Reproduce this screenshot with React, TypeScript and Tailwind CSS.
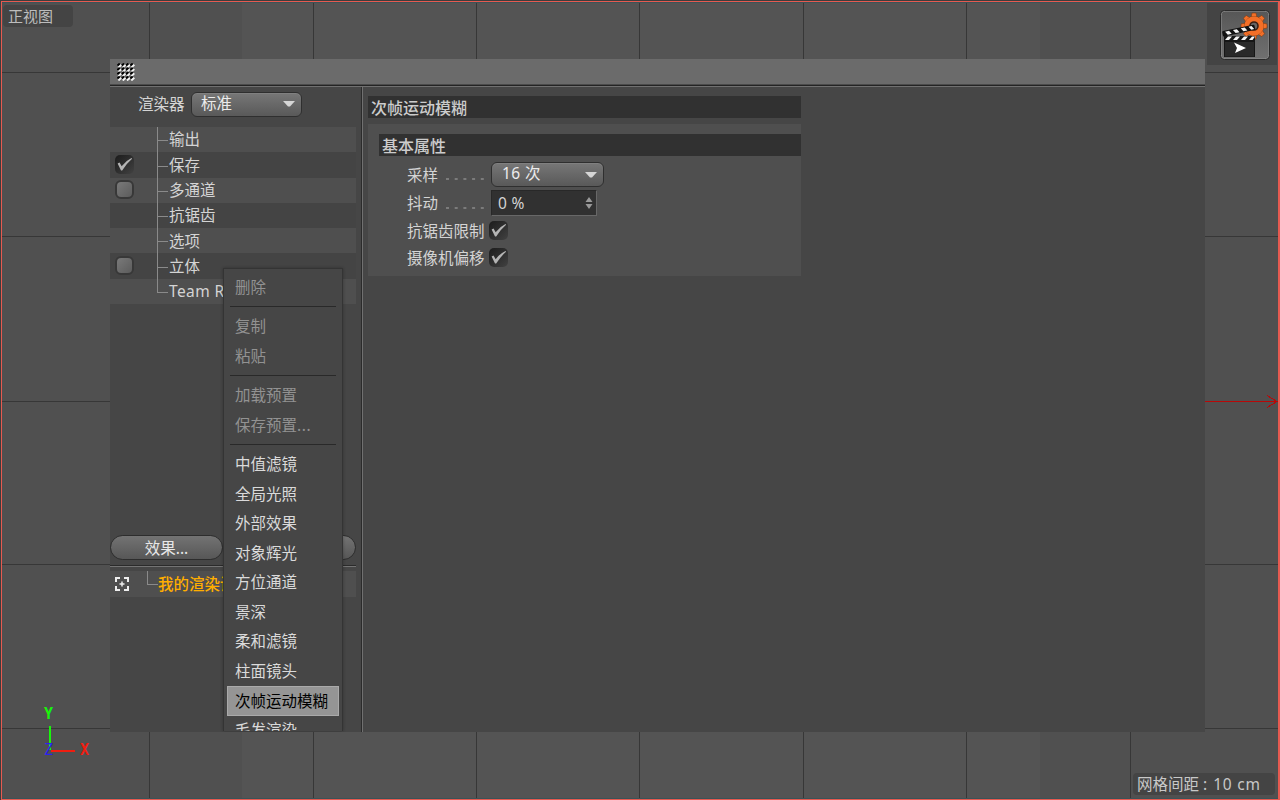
import type { ReactNode } from "react";

// Background grid line positions
const columns = [149, 313, 476, 639, 803, 966, 1130];
const rows = [72, 236, 401, 564, 728];

const settings: { label: string; box?: "on" | "off" }[] = [
	{ label: "输出" },
	{ label: "保存", box: "on" },
	{ label: "多通道", box: "off" },
	{ label: "抗锯齿" },
	{ label: "选项" },
	{ label: "立体", box: "off" },
	{ label: "Team Render" },
];

const effects = [
	"中值滤镜",
	"全局光照",
	"外部效果",
	"对象辉光",
	"方位通道",
	"景深",
	"柔和滤镜",
	"柱面镜头",
	"次帧运动模糊",
	"毛发渲染",
];

function Checkbox({ on }: { on: boolean }) {
	if (!on) {
		return (
			<span className="block size-[19px] rounded-[6px] border-2 border-[#383838] bg-linear-to-br from-[#7a7a7a] to-[#5c5c5c]" />
		);
	}
	return (
		<span className="block size-[19px] rounded-[5px] bg-linear-to-br from-[#1c1c1c] to-[#424242]">
			<svg viewBox="0 0 18 18" className="size-full">
				<path d="M2.5 8 4.3 7 6.3 10.6 Q10 5.5 15.6 2.8 L16.2 3.6 Q11 8 6.8 14.8 L5.7 14.8Z" fill="#b4b4b4" />
			</svg>
		</span>
	);
}

function Select({ value, className }: { value: string; className: string }) {
	return (
		<div
			className={`flex h-[25px] items-center justify-between rounded-[6px] border border-[#2f2f2f] bg-linear-to-b from-[#777777] to-[#595959] pl-[9px] pr-[6px] text-[#ececec] shadow-[inset_0_1px_0_#808080] ${className}`}
		>
			<span className="-mt-px">{value}</span>
			<svg viewBox="0 0 12 6" className="h-[6px] w-3">
				<path d="M0 0H12L7 5.5H5Z" fill="#d6d6d6" />
			</svg>
		</div>
	);
}

function MenuItem({ children, disabled }: { children: ReactNode; disabled?: boolean }) {
	return (
		<div className={`flex h-[29.6px] items-center px-2 pt-px ${disabled ? "text-[#929292]" : "text-[#dadada]"}`}>
			{children}
		</div>
	);
}

function Separator() {
	return <div className="mx-[3px] my-[4px] h-[1.8px] border-t border-[#292929]" />;
}

// Popup listing the effects, cut off by the lower edge of the window
function ContextMenu() {
	return (
		<div className="absolute left-[113px] top-[209px] h-[463px] w-[120px] overflow-hidden border border-b-0 border-[#343434] bg-[#464646] px-[3px] pt-[3px] shadow-[0_0_3px_rgba(0,0,0,0.3)]">
			<MenuItem disabled>删除</MenuItem>
			<Separator />
			<MenuItem disabled>复制</MenuItem>
			<MenuItem disabled>粘贴</MenuItem>
			<Separator />
			<MenuItem disabled>加载预置</MenuItem>
			<MenuItem disabled>
				保存预置<span className="tracking-[0.6px]">...</span>
			</MenuItem>
			<Separator />
			{effects.map((name) =>
				name === "次帧运动模糊" ? (
					<div key={name} className="flex h-[29.6px] items-center border border-[#aaaaaa] bg-[#959595] px-[7px] pt-px text-black">
						{name}
					</div>
				) : (
					<MenuItem key={name}>{name}</MenuItem>
				),
			)}
		</div>
	);
}

function SettingsTree() {
	return (
		<div className="mt-[10px] w-[246px]">
			{settings.map((item, i) => (
				<div key={item.label} className={`flex h-[25.3px] items-center ${i % 2 === 0 ? "bg-[#4f4f4f]" : "bg-[#444444]"}`}>
					<div className="-mt-px w-[46px] pl-[5px]">{item.box && <Checkbox on={item.box === "on"} />}</div>
					<div className="h-full w-[12px]">
						<div className={`w-[1.5px] bg-[#8a8a8a] ml-[0.5px] ${i === 6 ? "h-[13px]" : "h-full"}`} />
						<div className={`ml-px h-px bg-[#8a8a8a] ${i === 6 ? "" : "-mt-[12px]"}`} />
					</div>
					<span className={`whitespace-nowrap pl-[1px] pt-px ${i === 6 ? "tracking-[0.4px]" : ""}`}>{item.label}</span>
				</div>
			))}
		</div>
	);
}

function LeftPane() {
	return (
		<div className="flex w-[252px] shrink-0 flex-col border-r border-[#2b2b2b]">
			<div className="mt-[4px] flex h-[26px] items-center pl-7">
				<span className="w-[53px] pt-[2px]">渲染器</span>
				<Select value="标准" className="w-[111px]" />
			</div>
			<SettingsTree />
			<div className="mt-[231px] flex gap-[9px]">
				<div className="flex h-[25px] w-[113px] items-center justify-center rounded-full border border-[#2d2d2d] bg-linear-to-b from-[#737373] to-[#575757] text-[#e8e8e8]">
					<span className="pt-[2px]">效果...</span>
				</div>
				<div className="h-[25px] w-[124px] rounded-full border border-[#2d2d2d] bg-linear-to-b from-[#737373] to-[#575757]" />
			</div>
			<div className="mt-[5px] h-px w-[246px] bg-[#2b2b2b]" />
			<div className="h-px w-[246px] bg-[#747474]" />
			<div className="mt-[4px] flex h-[26px] w-[246px] items-center bg-[#4f4f4f]">
				<svg viewBox="0 0 14 14" className="ml-[5px] size-[14px]" fill="none" stroke="#eeeeee" strokeWidth="2">
					<path d="M1 5V1H5M9 1H13V5M13 9V13H9M5 13H1V9" />
					<path d="M7 4.5V9.5M4.5 7H9.5" strokeWidth="1.5" />
				</svg>
				<div className="-mt-[12px] ml-[18px] h-[14px] w-[11px] border-b border-l border-[#8a8a8a]" />
				<span className="whitespace-nowrap pt-[2px] font-medium text-[#ffae00]">我的渲染设置</span>
			</div>
		</div>
	);
}

function Heading({ children }: { children: ReactNode }) {
	return (
		<div className="flex h-[22px] items-center bg-[#313131] pl-[3px] pt-[2px] text-[16px] font-medium text-[#cccccc]">
			<span>{children}</span>
		</div>
	);
}

function Dots() {
	return (
		<svg viewBox="0 0 38 2" className="mr-[7px] mt-[9px] h-[2px] w-[38px]">
			<path d="M0 1H38" stroke="#a8a8a8" strokeWidth="1" strokeDasharray="3 5.7" />
		</svg>
	);
}

function RightPane() {
	return (
		<div className="flex-1 border-l border-[#707070] pl-[5px] pt-[9px]">
			<div className="w-[433px]">
				<Heading>次帧运动模糊</Heading>
				<div className="mt-[6px] h-[152px] bg-[#4f4f4f] pl-[11px] pt-[10px]">
					<Heading>基本属性</Heading>
					<div className="mt-[6px] flex h-[25px] items-center pl-7">
						<span className="w-[39px] pt-[2px]">采样</span>
						<Dots />
						<Select value="16 次" className="w-[113px] pl-[10px] tracking-[0.4px]" />
					</div>
					<div className="mt-[3px] flex h-[26px] items-center pl-7">
						<span className="w-[39px] pt-[2px]">抖动</span>
						<Dots />
						<div className="flex h-[26px] w-[106px] items-center justify-between border border-[#282828] border-b-[#686868] border-r-[#686868] bg-[#313131] pl-[6px] pr-[3px]">
							<span className="pt-px tracking-[0.3px]">0 %</span>
							<svg viewBox="0 0 8 12" className="h-3 w-2" fill="#999999">
								<path d="M4 0 7.5 5H.5ZM.5 7H7.5L4 12Z" />
							</svg>
						</div>
					</div>
					<div className="mt-[2px] flex h-[27px] items-start pl-7">
						<span className="w-[82px] pt-[6px]">抗锯齿限制</span>
						<span className="pt-[3px]">
							<Checkbox on />
						</span>
					</div>
					<div className="flex h-[27px] items-start pl-7">
						<span className="w-[82px] pt-[6px]">摄像机偏移</span>
						<span className="pt-[3px]">
							<Checkbox on />
						</span>
					</div>
				</div>
			</div>
		</div>
	);
}

// Clapperboard with an orange gear, top right corner of the viewport
function RenderSettingsIcon() {
	return (
		<svg viewBox="0 0 50 50" className="size-[50px]">
			<defs>
				<linearGradient id="tile" x1="0" y1="0" x2="0" y2="1">
					<stop offset="0" stopColor="#575757" />
					<stop offset="1" stopColor="#707070" />
				</linearGradient>
			</defs>
			<rect x="1" y="1" width="48" height="48" rx="4" fill="url(#tile)" stroke="#929292" strokeWidth="1" />
			<rect x=".5" y=".5" width="49" height="49" rx="4" fill="none" stroke="#2a2a2a" />
			<g fill="#f36f28" stroke="#7a3a14" strokeWidth=".6">
				{[0, 45, 90, 135, 180, 225, 270, 315].map((a) => (
					<path key={a} d="M31 7.5 32 3H36L37 7.5Z" transform={`rotate(${a} 34 16)`} />
				))}
				<circle cx="34" cy="16" r="9.6" />
			</g>
			<circle cx="34" cy="16" r="9.6" fill="#f36f28" />
			<circle cx="34" cy="16" r="4" fill="#666" stroke="#3a2015" strokeWidth="1.6" />
			<g transform="rotate(-12 4 26)">
				<rect x="3" y="21" width="33" height="5.5" rx="1" fill="#111" />
				<path d="M6 22H10L12 25.5H8ZM14 22H18L20 25.5H16ZM22 22H26L28 25.5H24ZM30 22H33L35 25.5H32Z" fill="#f4f4f4" />
			</g>
			<rect x="4" y="26" width="31" height="21" fill="#161616" />
			<path d="M8 26.5H12L9 30H5ZM16 26.5H20L17 30H13ZM24 26.5H28L25 30H21ZM32 26.5H35L32.5 30H29Z" fill="#f4f4f4" />
			<rect x="5" y="32" width="29" height="14.5" fill="#292929" />
			<path d="M14 32.5 26 38 15 43 17 38Z" fill="#fff" />
		</svg>
	);
}

function Viewport() {
	return (
		<svg viewBox="0 0 1280 800" className="absolute inset-0 size-full" shapeRendering="crispEdges">
			<rect width="1280" height="800" fill="#505050" />
			<rect x="242" width="798" height="800" fill="#545454" />
			{columns.map((x) => (
				<rect key={x} x={x} y="3" width="1" height="795" fill="#373737" />
			))}
			{rows.map((y) => (
				<rect key={y} x="2" y={y} width={y === 401 ? 1200 : 1276} height="1" fill="#373737" />
			))}
			<rect x="1202" y="401" width="75" height="1" fill="#b80808" />
			<path d="M1267 395.5 1277 401.5 1267 407.5" stroke="#b80808" fill="none" />
			<path d="M50 726V750" stroke="#19f50c" strokeWidth="2" />
			<path d="M51 750.5H75" stroke="#f01d10" strokeWidth="2" />
		</svg>
	);
}

// Small staggered bumps, the toolbar drag handle
function Grip() {
	return (
		<svg viewBox="0 0 18 18" className="size-[18px]">
			{[0, 1, 2, 3].map((row) =>
				[0, 1, 2, 3].map((col) => (
					<g key={`${row}-${col}`} transform={`translate(${col * 4.3} ${row * 4.3})`}>
						<path d="M0.5 2.6 2.8 0.5" stroke="#000000" strokeWidth="2" />
						<path d="M1.4 4.6 4.4 1.8" stroke="#f5f5f5" strokeWidth="1.9" />
					</g>
				)),
			)}
		</svg>
	);
}

export default function App() {
	return (
		<div className="relative h-[800px] w-[1280px] overflow-hidden font-['Noto_Sans','Noto_Sans_CJK_SC',sans-serif] text-[15.5px] leading-none text-[#d4d4d4]">
			<Viewport />
			<div className="absolute left-[3px] top-[5px] flex h-[22px] w-[70px] items-center rounded bg-[#444444] pl-[5px] text-[15px] text-[#bdbdbd]">
				正视图
			</div>
			<div className="absolute right-[3px] top-[3px] flex h-[62px] w-[70px] justify-end bg-[#444444] pr-[7px] pt-[7px]">
				<RenderSettingsIcon />
			</div>
			<div className="absolute bottom-[5px] right-[5px] flex h-[22px] w-[142px] items-center rounded bg-[#444444] pl-[4px] pt-px text-[15.5px] text-[#c8c8c8]">
				<span>网格间距 : </span>
				<span className="ml-[6px] tracking-[0.8px]">10 cm</span>
			</div>
			<span className="absolute left-[44px] top-[707px] font-['DejaVu_Sans_Mono',monospace] text-[15px] font-bold text-[#19f50c]">Y</span>
			<span className="absolute left-[80px] top-[743px] font-['DejaVu_Sans_Mono',monospace] text-[15px] font-bold text-[#f01d10]">X</span>
			<span className="absolute left-[44px] top-[743px] font-['DejaVu_Sans_Mono',monospace] text-[15px] text-[#2a22f0]">Z</span>

			<div className="absolute left-[110px] top-[59px] flex h-[673px] w-[1095px] flex-col overflow-hidden bg-[#464646]">
				<div className="flex h-[25px] shrink-0 items-center bg-[#6b6b6b] pl-[7px]">
					<Grip />
				</div>
				<div className="h-px shrink-0 bg-[#4b4b4b]" />
				<div className="h-px shrink-0 bg-[#242424]" />
				<div className="h-px shrink-0 bg-[#707070]" />
				<div className="flex min-h-0 flex-1">
					<LeftPane />
					<RightPane />
				</div>
				<ContextMenu />
			</div>
			{/* Red frame of the active view */}
			<div className="pointer-events-none absolute inset-0 border-l border-t border-[#3d3d3d]">
				<div className="size-full border border-r-2 border-[#e65a50]">
					<div className="size-full border-y border-[#3b5358]" />
				</div>
			</div>
		</div>
	);
}
